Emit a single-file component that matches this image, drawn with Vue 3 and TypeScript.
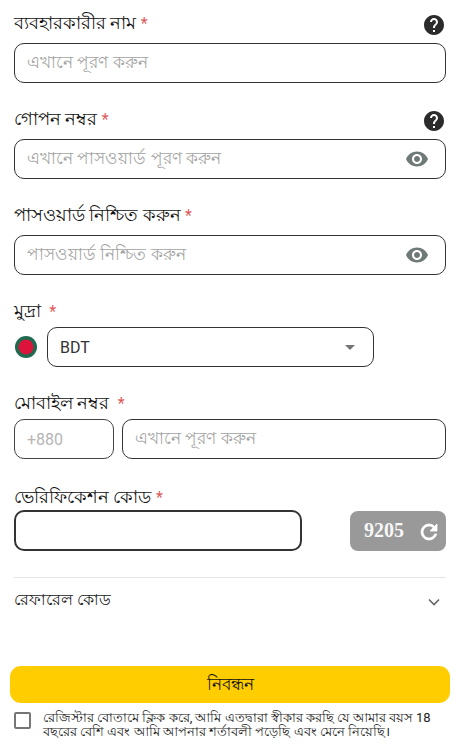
<script setup lang="ts">
const help = 'M12 2C6.48 2 2 6.48 2 12s4.48 10 10 10 10-4.48 10-10S17.52 2 12 2zm1 17h-2v-2h2v2zm2.07-7.75l-.9.92C13.45 12.9 13 13.5 13 15h-2v-.5c0-1.1.45-2.1 1.17-2.83l1.24-1.26c.37-.36.59-.86.59-1.41 0-1.1-.9-2-2-2s-2 .9-2 2H8c0-2.21 1.79-4 4-4s4 1.79 4 4c0 .88-.36 1.68-.93 2.25z'
const eye = 'M12 4.5C7 4.5 2.73 7.61 1 12c1.73 4.39 6 7.5 11 7.5s9.27-3.11 11-7.5c-1.73-4.39-6-7.5-11-7.5zM12 17c-2.76 0-5-2.24-5-5s2.24-5 5-5 5 2.24 5 5-2.24 5-5 5zm0-8c-1.66 0-3 1.34-3 3s1.34 3 3 3 3-1.34 3-3-1.34-3-3-3z'
</script>

<template>
  <main class="page">
    <section class="field tall">
      <div class="label-row">
        <label class="label">ব্যবহারকারীর নাম <span class="req">*</span></label>
        <svg class="help" viewBox="2 2 20 20"><path :d="help" /></svg>
      </div>
      <div class="box"><span class="ph">এখানে পূরণ করুন</span></div>
    </section>

    <section class="field tall">
      <div class="label-row">
        <label class="label">গোপন নম্বর <span class="req">*</span></label>
        <svg class="help" viewBox="2 2 20 20"><path :d="help" /></svg>
      </div>
      <div class="box">
        <span class="ph">এখানে পাসওয়ার্ড পূরণ করুন</span>
        <svg class="eye" viewBox="0 0 24 24"><path :d="eye" /></svg>
      </div>
    </section>

    <section class="field tall">
      <div class="label-row">
        <label class="label">পাসওয়ার্ড নিশ্চিত করুন <span class="req">*</span></label>
      </div>
      <div class="box">
        <span class="ph">পাসওয়ার্ড নিশ্চিত করুন</span>
        <svg class="eye" viewBox="0 0 24 24"><path :d="eye" /></svg>
      </div>
    </section>

    <section class="field short">
      <div class="label-row">
        <label class="label">মুদ্রা <span class="req gap">*</span></label>
      </div>
      <div class="currency">
        <svg class="flag" viewBox="0 0 22 22">
          <circle cx="11" cy="11" r="11" fill="#1f6a4f" />
          <circle cx="11" cy="11" r="7.5" fill="#dc143c" />
        </svg>
        <div class="box select">
          <span class="value">BDT</span>
          <span class="caret"></span>
        </div>
      </div>
    </section>

    <section class="field short">
      <div class="label-row">
        <label class="label">মোবাইল নম্বর <span class="req gap">*</span></label>
      </div>
      <div class="phone">
        <div class="box prefix"><span class="latin">+880</span></div>
        <div class="box grow"><span class="ph">এখানে পূরণ করুন</span></div>
      </div>
    </section>

    <section class="field code">
      <div class="label-row">
        <label class="label">ভেরিফিকেশন কোড <span class="req">*</span></label>
      </div>
      <div class="verify">
        <div class="box focus"></div>
        <div class="captcha">
          <span class="digits">9205</span>
          <svg class="refresh" viewBox="0 0 24 24">
            <path d="M17.65 6.35A7.96 7.96 0 0 0 12 4a8 8 0 1 0 7.75 10h-2.08A6 6 0 1 1 12 6c1.66 0 3.14.69 4.22 1.78L13 11h7V4l-2.35 2.35z" />
          </svg>
        </div>
      </div>
    </section>

    <section class="referral">
      <span>রেফারেল কোড</span>
      <svg class="chevron" viewBox="0 0 12 8"><path d="M1 1.5l5 5 5-5" /></svg>
    </section>

    <button class="submit" type="button">নিবন্ধন</button>

    <section class="terms">
      <span class="check"></span>
      <p>রেজিস্টার বোতামে ক্লিক করে, আমি এতদ্বারা স্বীকার করছি যে আমার বয়স 18<br />বছরের বেশি এবং আমি আপনার শর্তাবলী পড়েছি এবং মেনে নিয়েছি।</p>
    </section>
  </main>
</template>

<style>
html, body { margin: 0; background: #fff; }
</style>

<style scoped>
.page {
  width: 476px;
  height: 754px;
  box-sizing: border-box;
  padding: 3px 30px 0 14px;
  font-family: Roboto, "Noto Sans", sans-serif;
  color: #222;
  overflow: hidden;
}
.field { margin-bottom: 16px; }
.tall .label-row { height: 40px; }
.short .label-row { height: 36px; }
.code .label-row { height: 35px; }
.code { margin-bottom: 26px; }
.label-row { display: flex; justify-content: space-between; align-items: flex-start; }
.label { font-size: 17.5px; line-height: 40px; color: #111; white-space: nowrap; }
.code .label { font-size: 18px; line-height: 44px; }
.req { color: #e05a5a; font-size: 16px; }
.req.gap { margin-left: 4px; }
.help { width: 20px; height: 20px; margin: 12px 2px 0 0; fill: #2b2b2b; }
.box {
  height: 40px;
  box-sizing: border-box;
  border: 1px solid #333;
  border-radius: 10px;
  display: flex;
  align-items: center;
  justify-content: space-between;
  padding: 0 7px 0 12px;
  background: #fff;
}
.ph { font-size: 17.3px; color: #a3a3a3; white-space: nowrap; }
.latin { font-size: 16px; color: #b5b5b5; }
.eye { width: 24px; height: 24px; fill: #6f7a78; margin-right: 9px; }
.currency { display: flex; align-items: center; gap: 10px; padding-left: 1px; }
.flag { width: 22px; height: 22px; flex: none; }
.select { width: 327px; }
.value { font-size: 16px; color: #333; }
.caret {
  width: 0;
  height: 0;
  border-left: 5px solid transparent;
  border-right: 5px solid transparent;
  border-top: 5px solid #757575;
  margin-right: 11px;
}
.phone { display: flex; gap: 8px; }
.prefix { width: 100px; flex: none; border-color: #444; }
.grow { flex: 1; }
.verify { display: flex; justify-content: space-between; align-items: flex-start; }
.focus { width: 288px; height: 41px; border: 2px solid #333; }
.captcha {
  width: 96px;
  height: 40px;
  margin-top: 1px;
  border-radius: 8px;
  background: #999;
  color: #fff;
  display: flex;
  align-items: center;
  box-sizing: border-box;
  padding: 0 5px 2px 14px;
  justify-content: space-between;
}
.digits { font-family: "Liberation Serif", serif; font-size: 20px; font-weight: 700; opacity: 0.92; }
.refresh { width: 24px; height: 24px; fill: #fff; stroke: #fff; stroke-width: 0.8; margin-top: 3px; }
.referral {
  border-top: 1px solid #e4e4e4;
  height: 46px;
  box-sizing: border-box;
  padding: 0 6px 0 0;
  display: flex;
  justify-content: space-between;
  align-items: center;
  font-size: 16.2px;
  color: #222;
}
.chevron { width: 12px; height: 8px; fill: none; stroke: #666; stroke-width: 1.6; margin-top: 3px; }
.submit {
  display: block;
  width: 440px;
  height: 37px;
  margin: 43px 0 0 -4px;
  border: 0;
  border-radius: 11px;
  background: #ffcd00;
  color: #111;
  font-family: inherit;
  font-size: 17px;
  font-weight: 500;
  padding: 0;
}
.terms { display: flex; gap: 12px; margin-top: 9px; }
.check {
  width: 17px;
  height: 17px;
  flex: none;
  border: 2px solid #767676;
  border-radius: 2px;
  box-sizing: border-box;
}
.terms p {
  margin: -1px 0 0;
  font-size: 13px;
  line-height: 14px;
  color: #222;
  white-space: nowrap;
}
</style>
